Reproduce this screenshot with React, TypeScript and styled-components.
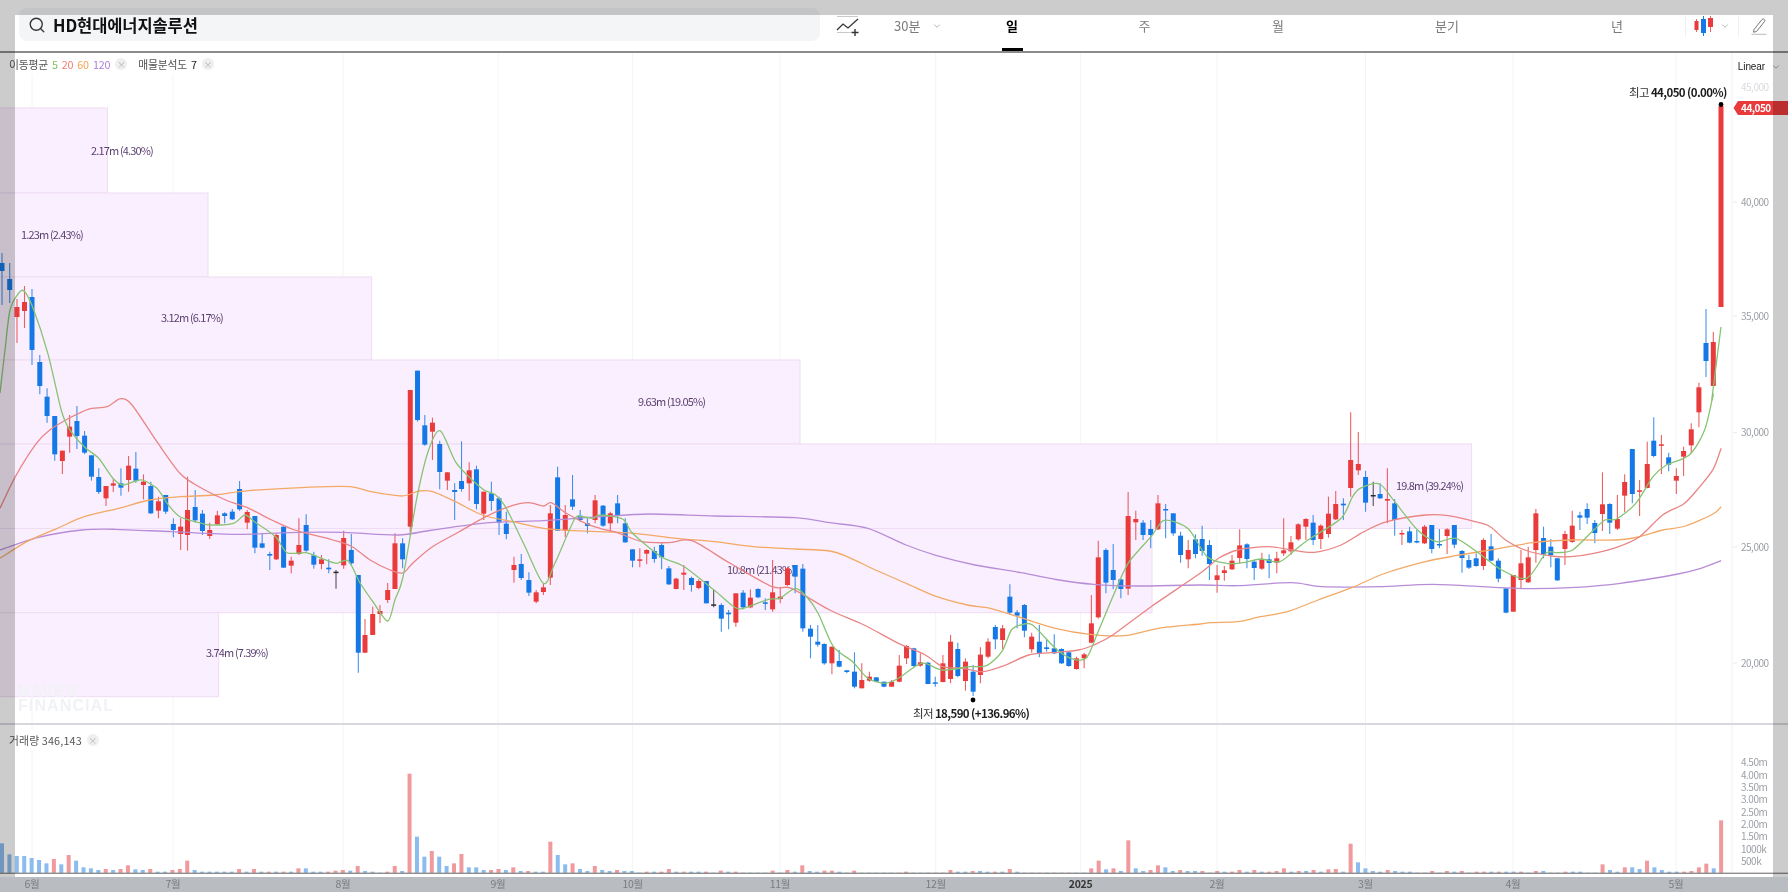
import styled, { createGlobalStyle } from 'styled-components'
import { Search, ChevronDown } from 'lucide-react'

type Tone = 'r' | 'b' | 'k'
type RawCandle = [number, Tone, number, number, number, number]
type Point = [number, number]

interface Candle {
  x: number
  tone: Tone
  high: number
  top: number
  bottom: number
  low: number
}

const RED = '#e93a3c'
const BLUE = '#1479e6'
const DARK = '#2a2a2a'
const TONE: Record<Tone, string> = { r: RED, b: BLUE, k: DARK }

// values were read in three horizontal slices of the chart, each with its own scale
const SLICE_A = { x0: 0, y0: 300, sx: 2.613 }
const SLICE_B = { x0: 600, y0: 350, sx: 2.613 }
const SLICE_C = { x0: 1188, y0: 350, sx: 2.613 }

const toCandles = (s: typeof SLICE_A, rows: RawCandle[]): Candle[] =>
  rows.map(([X, tone, h, t, b, l]) => ({
    x: s.x0 + X / s.sx,
    tone,
    high: s.y0 + h / 3,
    top: s.y0 + t / 3,
    bottom: s.y0 + b / 3,
    low: s.y0 + l / 3,
  }))

const toPath = (s: typeof SLICE_A, rows: Point[]): Point[] =>
  rows.map(([X, Y]) => [s.x0 + X / s.sx, s.y0 + Y / 3])

const candles: Candle[] = [
  { x: 2, tone: 'b', high: 253, top: 263, bottom: 271, low: 305 },
  { x: 9.7, tone: 'b', high: 263, top: 279, bottom: 290, low: 303 },
  { x: 17, tone: 'r', high: 299, top: 307, bottom: 317, low: 343 },
  { x: 24.5, tone: 'r', high: 286, top: 302, bottom: 311, low: 328 },
  { x: 32, tone: 'b', high: 289, top: 297, bottom: 350, low: 365 },
  ...toCandles(SLICE_A, [
    [104, 'b', 165, 186, 258, 283], [123, 'b', 265, 290, 348, 368], [143, 'b', 348, 348, 463, 482],
    [163, 'r', 452, 452, 483, 522], [182, 'r', 345, 380, 410, 458], [201, 'b', 318, 363, 408, 447],
    [221, 'b', 393, 407, 458, 463], [239, 'b', 466, 466, 530, 542], [258, 'b', 505, 531, 576, 582],
    [277, 'r', 558, 558, 595, 618], [296, 'r', 538, 550, 557, 576], [316, 'b', 505, 550, 563, 587],
    [336, 'r', 468, 497, 540, 575], [355, 'b', 456, 506, 542, 548], [375, 'r', 523, 545, 555, 598],
    [394, 'b', 545, 558, 640, 642], [414, 'r', 590, 604, 632, 655], [433, 'b', 585, 585, 635, 642],
    [453, 'b', 655, 672, 690, 712], [472, 'r', 655, 680, 702, 750], [490, 'r', 530, 630, 705, 752],
    [510, 'b', 570, 621, 661, 668], [529, 'b', 630, 641, 693, 705], [548, 'r', 668, 690, 708, 717],
    [568, 'r', 632, 646, 673, 675], [587, 'b', 637, 640, 648, 670], [607, 'b', 627, 635, 658, 660],
    [626, 'b', 543, 567, 628, 632], [646, 'r', 630, 636, 668, 688], [666, 'b', 648, 648, 743, 760],
    [685, 'b', 700, 730, 743, 745], [705, 'b', 755, 762, 767, 810], [722, 'r', 700, 705, 778, 780],
    [741, 'b', 680, 680, 803, 803], [761, 'r', 770, 782, 797, 820], [781, 'r', 655, 735, 762, 765],
    [800, 'b', 643, 675, 752, 755], [820, 'b', 755, 766, 794, 806], [840, 'r', 765, 778, 792, 808],
    [859, 'b', 778, 803, 808, 820], [878, 'k', 810, 815, 818, 866], [898, 'r', 692, 714, 796, 806],
    [918, 'b', 702, 750, 790, 797],
  ]),
  { x: 358.3, tone: 'b', high: 575, top: 575, bottom: 652.7, low: 672.7 },
  { x: 365, tone: 'r', high: 619, top: 635, bottom: 652.7, low: 653 },
  { x: 372.7, tone: 'r', high: 606.7, top: 614, bottom: 635, low: 635 },
  { x: 380, tone: 'r', high: 605, top: 611, bottom: 614, low: 623 },
  { x: 387.7, tone: 'r', high: 583, top: 590, bottom: 600, low: 603 },
  ...toCandles(SLICE_A, [
    [1032, 'r', 700, 730, 867, 867], [1052, 'b', 715, 730, 778, 805], [1072, 'r', 270, 270, 680, 705],
    [1091, 'b', 212, 212, 360, 365], [1110, 'b', 345, 376, 434, 437], [1130, 'r', 353, 368, 395, 480],
    [1149, 'b', 422, 432, 516, 568], [1169, 'r', 517, 517, 542, 570], [1188, 'b', 550, 570, 576, 660],
    [1206, 'b', 424, 543, 567, 575], [1226, 'r', 487, 511, 550, 602], [1245, 'b', 497, 508, 612, 628],
    [1264, 'r', 575, 575, 641, 660], [1284, 'b', 545, 580, 603, 632], [1304, 'b', 590, 595, 668, 705],
    [1323, 'b', 635, 671, 702, 718], [1343, 'r', 770, 795, 810, 848], [1362, 'b', 762, 792, 834, 840],
    [1382, 'b', 817, 840, 878, 888], [1401, 'r', 870, 877, 905, 910], [1420, 'r', 850, 862, 876, 885],
    [1438, 'r', 615, 640, 833, 855], [1457, 'b', 500, 532, 692, 692], [1477, 'r', 615, 645, 692, 712],
    [1496, 'b', 525, 598, 620, 630], [1516, 'b', 630, 647, 660, 665], [1535, 'b', 655, 670, 678, 700],
    [1555, 'r', 585, 601, 660, 670],
  ]),
  ...toCandles(SLICE_B, [
    [8, 'b', 465, 467, 527, 530], [27, 'r', 485, 490, 520, 545], [46, 'b', 435, 460, 497, 520],
    [66, 'b', 505, 520, 577, 578], [85, 'b', 598, 598, 632, 652], [104, 'r', 595, 628, 632, 652],
    [122, 'r', 598, 600, 611, 643], [142, 'b', 590, 603, 627, 638], [161, 'b', 580, 585, 622, 658],
    [180, 'b', 648, 655, 703, 705], [199, 'r', 683, 686, 717, 718], [219, 'r', 645, 668, 674, 720],
    [239, 'b', 680, 684, 705, 725], [258, 'r', 688, 693, 714, 718], [278, 'b', 693, 693, 760, 760],
    [297, 'k', 720, 763, 765, 772], [317, 'b', 760, 765, 806, 845], [336, 'b', 780, 788, 793, 838],
    [355, 'r', 730, 730, 818, 830], [374, 'b', 720, 728, 772, 778], [393, 'r', 718, 743, 772, 775],
    [413, 'b', 715, 717, 742, 745], [432, 'b', 745, 757, 761, 780], [451, 'r', 630, 727, 778, 785],
    [471, 'r', 710, 740, 747, 760], [490, 'r', 650, 655, 705, 708], [510, 'b', 645, 645, 680, 730],
    [530, 'b', 642, 656, 835, 845], [550, 'b', 825, 836, 860, 925], [569, 'b', 825, 875, 884, 890],
    [586, 'b', 880, 882, 940, 944], [606, 'r', 890, 890, 940, 973], [625, 'b', 900, 933, 950, 952],
    [645, 'b', 960, 961, 966, 970], [665, 'b', 907, 965, 1010, 1015], [684, 'r', 940, 990, 1015, 1015],
    [704, 'r', 965, 980, 992, 995], [722, 'b', 982, 982, 995, 995], [742, 'b', 995, 995, 1010, 1012],
    [762, 'r', 990, 995, 1010, 1010], [782, 'r', 915, 947, 995, 997], [801, 'r', 885, 888, 925, 942],
    [820, 'b', 893, 895, 948, 950], [837, 'r', 910, 937, 947, 950], [857, 'b', 935, 938, 1002, 1003],
    [876, 'b', 980, 997, 1000, 1010], [896, 'r', 915, 940, 996, 997], [916, 'r', 855, 875, 987, 1000],
    [935, 'b', 878, 897, 978, 982], [955, 'r', 925, 935, 993, 1022], [975, 'b', 945, 965, 1025, 1038],
    [994, 'r', 892, 914, 975, 1000], [1014, 'r', 865, 875, 920, 925], [1033, 'b', 825, 831, 868, 898],
    [1052, 'r', 825, 835, 870, 897], [1071, 'b', 703, 740, 788, 795], [1090, 'b', 780, 787, 797, 835],
    [1109, 'b', 762, 765, 842, 862], [1128, 'r', 848, 860, 898, 908], [1148, 'b', 825, 875, 910, 922],
    [1167, 'b', 868, 892, 897, 905], [1187, 'b', 853, 895, 910, 912], [1206, 'b', 895, 897, 940, 942],
    [1225, 'b', 905, 907, 948, 950], [1245, 'r', 920, 925, 957, 959], [1265, 'r', 908, 913, 925, 955],
    [1284, 'r', 735, 820, 878, 880], [1302, 'r', 572, 622, 802, 806], [1322, 'b', 595, 600, 698, 730],
    [1341, 'b', 582, 660, 690, 718], [1361, 'b', 688, 688, 717, 745], [1380, 'r', 426, 498, 716, 735],
    [1400, 'r', 482, 507, 517, 570], [1419, 'b', 510, 518, 555, 570], [1439, 'b', 510, 537, 555, 595],
    [1458, 'r', 435, 460, 538, 540], [1478, 'b', 462, 477, 480, 565], [1498, 'b', 490, 490, 550, 557],
    [1517, 'b', 545, 557, 615, 638], [1537, 'r', 570, 600, 628, 655], [1556, 'b', 553, 568, 612, 625],
  ]),
  ...toCandles(SLICE_C, [
    [37, 'b', 527, 567, 603, 617], [56, 'b', 570, 585, 642, 690], [76, 'r', 645, 676, 690, 728],
    [95, 'r', 648, 661, 669, 692], [115, 'r', 615, 632, 658, 660], [135, 'r', 538, 586, 624, 640],
    [154, 'b', 580, 583, 627, 655], [173, 'b', 630, 635, 654, 690], [193, 'r', 608, 628, 656, 660],
    [212, 'b', 613, 628, 639, 685], [232, 'r', 605, 625, 638, 670], [250, 'r', 505, 601, 610, 618],
    [269, 'r', 558, 577, 604, 615], [288, 'r', 520, 523, 568, 572], [308, 'r', 505, 507, 530, 570],
    [327, 'b', 495, 518, 570, 585], [347, 'r', 523, 527, 567, 597], [367, 'r', 440, 491, 552, 563],
    [386, 'r', 423, 462, 508, 510], [406, 'b', 445, 461, 466, 510], [425, 'r', 187, 330, 414, 440],
    [445, 'r', 246, 342, 361, 375], [464, 'b', 362, 381, 458, 485], [484, 'k', 395, 435, 438, 468],
    [502, 'b', 400, 432, 445, 447], [521, 'r', 355, 447, 452, 520], [540, 'b', 447, 460, 510, 557],
    [559, 'r', 540, 549, 552, 585], [579, 'b', 530, 544, 578, 580], [598, 'b', 540, 573, 577, 580],
    [618, 'r', 525, 530, 580, 582], [637, 'b', 525, 525, 597, 610], [657, 'b', 537, 582, 585, 595],
    [677, 'r', 535, 538, 558, 612], [696, 'b', 525, 525, 584, 595], [716, 'b', 600, 603, 624, 668],
    [734, 'b', 615, 630, 653, 657], [753, 'b', 610, 625, 648, 650], [772, 'r', 565, 570, 648, 660],
    [792, 'b', 552, 589, 632, 634], [811, 'b', 625, 632, 686, 697], [831, 'b', 715, 715, 788, 790],
    [850, 'r', 675, 675, 785, 785], [870, 'r', 600, 640, 690, 715], [889, 'r', 590, 622, 697, 698],
    [909, 'r', 477, 490, 600, 638], [929, 'b', 530, 564, 614, 625], [948, 'b', 567, 590, 615, 652],
    [965, 'b', 625, 625, 691, 693], [985, 'r', 542, 552, 597, 645], [1004, 'r', 482, 527, 576, 578],
    [1024, 'b', 485, 496, 503, 540], [1043, 'b', 460, 477, 503, 522], [1063, 'b', 510, 519, 549, 580],
    [1083, 'r', 367, 463, 492, 543], [1102, 'b', 460, 462, 518, 552], [1122, 'r', 435, 507, 536, 540],
    [1141, 'r', 373, 396, 437, 487], [1161, 'b', 297, 297, 432, 460], [1180, 'r', 390, 421, 424, 498],
    [1200, 'r', 275, 342, 414, 415], [1217, 'b', 202, 272, 318, 322], [1237, 'r', 255, 283, 285, 372],
    [1256, 'b', 308, 322, 344, 364], [1276, 'r', 355, 378, 392, 432], [1295, 'r', 290, 303, 320, 378],
    [1315, 'r', 220, 238, 286, 310], [1335, 'r', 98, 112, 187, 232],
  ]),
  { x: 1706, tone: 'b', high: 309, top: 343, bottom: 361, low: 377 },
  { x: 1713.3, tone: 'r', high: 332, top: 342, bottom: 386, low: 386 },
  { x: 1721, tone: 'r', high: 105, top: 106, bottom: 307, low: 307 },
]

const ma5: Point[] = [
  [0, 393], [5, 350], [10, 310], [18, 294], [24, 291], [33, 308],
  ...toPath(SLICE_A, [
    [125, 160], [160, 330], [180, 385], [220, 440], [258, 475], [295, 535], [320, 555], [350, 545], [372, 540],
    [410, 565], [440, 615], [470, 650], [520, 668], [550, 675], [610, 670], [640, 645], [665, 665], [720, 710],
    [750, 758], [800, 758], [840, 775], [878, 790], [910, 782], [941, 849], [975, 906], [1013, 963], [1032, 900],
    [1053, 831], [1090, 590], [1120, 450], [1150, 392], [1190, 485], [1225, 530], [1265, 570], [1295, 585],
    [1323, 625], [1370, 735], [1420, 850], [1450, 790], [1500, 660], [1520, 650], [1550, 655],
  ]),
  ...toPath(SLICE_B, [
    [0, 495], [60, 508], [85, 550], [160, 620], [220, 650], [298, 720], [350, 770], [375, 775], [440, 748], [470, 745],
    [510, 715], [540, 740], [570, 790], [610, 890], [660, 935], [700, 985], [745, 1000], [780, 985], [840, 940],
    [895, 960], [965, 950], [1010, 947], [1050, 905], [1075, 840], [1100, 825], [1130, 825], [1190, 895], [1230, 925],
    [1270, 925], [1300, 850], [1340, 740], [1380, 640], [1440, 560], [1470, 513], [1500, 515], [1540, 540],
  ]),
  ...toPath(SLICE_C, [
    [50, 620], [100, 640], [150, 637], [190, 627], [240, 635], [290, 590], [320, 565], [400, 505], [430, 440], [450, 415],
    [500, 402], [540, 455], [600, 540], [650, 575], [700, 565], [760, 610], [820, 660], [885, 685], [935, 610], [965, 608],
    [1005, 600], [1060, 540], [1090, 510], [1120, 507], [1170, 460], [1215, 380], [1250, 345], [1310, 315], [1350, 240],
    [1372, 135],
  ]),
  [1712, 398], [1721, 327],
]

const ma20: Point[] = [
  ...toPath(SLICE_A, [
    [0, 625], [40, 530], [95, 430], [130, 390], [180, 355], [230, 328], [280, 320], [315, 296], [345, 315], [410, 425],
    [470, 520], [520, 560], [590, 600], [650, 625], [710, 660], [770, 690], [870, 720], [920, 740], [967, 780], [1019, 810],
    [1053, 819], [1079, 789], [1130, 740], [1200, 695], [1270, 650], [1330, 620], [1380, 608], [1420, 618], [1440, 608],
    [1480, 640], [1530, 670],
  ]),
  ...toPath(SLICE_B, [
    [0, 535], [50, 550], [110, 575], [180, 578], [240, 572], [340, 640], [450, 710], [500, 715], [600, 780], [690, 825],
    [780, 880], [850, 915], [895, 950], [950, 955], [1000, 965], [1060, 945], [1120, 915], [1180, 908], [1250, 900],
    [1290, 885], [1340, 855], [1440, 770], [1568, 670],
  ]),
  ...toPath(SLICE_C, [
    [80, 625], [130, 600], [210, 590], [270, 600], [330, 607], [400, 585], [460, 545], [520, 515], [620, 495], [680, 497],
    [750, 515], [790, 530], [830, 570], [880, 600], [950, 618], [1000, 620], [1060, 610], [1120, 592], [1180, 560],
    [1240, 495], [1295, 462], [1330, 420], [1372, 358], [1393, 295],
  ]),
]

const ma60: Point[] = [
  ...toPath(SLICE_A, [
    [0, 775], [70, 725], [150, 685], [220, 650], [310, 625], [390, 600], [470, 590], [560, 585], [650, 572], [800, 562],
    [915, 560], [970, 575], [1050, 588], [1095, 573], [1130, 575], [1190, 605], [1260, 645], [1340, 665], [1420, 685],
    [1500, 692],
  ]),
  ...toPath(SLICE_B, [
    [0, 545], [90, 550], [200, 565], [300, 575], [400, 590], [510, 597], [600, 603], [650, 622], [720, 660], [800, 700],
    [880, 740], [960, 765], [1020, 775], [1100, 803], [1190, 835], [1280, 853], [1370, 857], [1460, 835], [1568, 822],
  ]),
  ...toPath(SLICE_C, [
    [60, 818], [130, 815], [190, 800], [260, 785], [340, 750], [430, 712], [510, 672], [620, 635], [700, 617], [800, 598],
    [900, 578], [1000, 570], [1120, 570], [1180, 560], [1240, 540], [1300, 528], [1372, 492], [1393, 470],
  ]),
]

const ma120: Point[] = [
  ...toPath(SLICE_A, [
    [0, 750], [100, 712], [215, 690], [300, 688], [450, 695], [620, 703], [780, 697], [900, 697], [1040, 705], [1130, 690],
    [1280, 668], [1420, 662], [1568, 650],
  ]),
  ...toPath(SLICE_B, [
    [130, 492], [300, 498], [510, 503], [600, 518], [700, 535], [800, 585], [880, 617], [980, 645], [1100, 668], [1200, 690],
    [1290, 703], [1400, 708], [1568, 705],
  ]),
  ...toPath(SLICE_C, [
    [130, 707], [270, 698], [350, 710], [500, 710], [640, 703], [800, 712], [900, 716], [1000, 713], [1130, 700], [1280, 672],
    [1340, 655], [1393, 632],
  ]),
]

const profile = [
  { top: 108, bottom: 193, right: 107.4, text: '2.17m (4.30%)', tx: 91, ty: 154.5 },
  { top: 193, bottom: 277, right: 208, text: '1.23m (2.43%)', tx: 21, ty: 239 },
  { top: 277, bottom: 360, right: 371.6, text: '3.12m (6.17%)', tx: 161, ty: 322 },
  { top: 360, bottom: 444, right: 800, text: '9.63m (19.05%)', tx: 638, ty: 406 },
  { top: 444, bottom: 528.5, right: 1471.6, text: '19.8m (39.24%)', tx: 1396, ty: 490 },
  { top: 528.5, bottom: 612.7, right: 1152, text: '10.8m (21.43%)', tx: 727, ty: 574 },
  { top: 612.7, bottom: 696.7, right: 218.7, text: '3.74m (7.39%)', tx: 206, ty: 657 },
]

const priceTicks = [
  { y: 202, label: '40,000' }, { y: 316, label: '35,000' }, { y: 432.7, label: '30,000' },
  { y: 547, label: '25,000' }, { y: 663, label: '20,000' },
]
const volumeTicks = [
  { y: 762.7, label: '4.50m' }, { y: 775, label: '4.00m' }, { y: 787, label: '3.50m' }, { y: 799, label: '3.00m' },
  { y: 812, label: '2.50m' }, { y: 824, label: '2.00m' }, { y: 836.7, label: '1.50m' }, { y: 849, label: '1000k' }, { y: 861, label: '500k' },
]
const months = [
  { x: 32, label: '6월' }, { x: 173, label: '7월' }, { x: 343, label: '8월' }, { x: 498, label: '9월' },
  { x: 632.6, label: '10월' }, { x: 780, label: '11월' }, { x: 935.7, label: '12월' }, { x: 1080.6, label: '2025', strong: true },
  { x: 1217, label: '2월' }, { x: 1365.5, label: '3월' }, { x: 1513, label: '4월' }, { x: 1676, label: '5월' },
]

const volumeLeft = 'b490 b523 b528 b528 b534 b540 b550 r537 b553 r525 b542 b562 b565 b570 r567 b570 r567 r556 b568 b570 r567 b575 b575 r570 r567 r542 b570 b575 b575 b575 b575 b575 r567 b575 r567 b575 r575 b575 r575 b575 r565 b565 b575 b575 r575 r572 r570 b572 r558 b573 b575 b578 r575 r558 b573 r281 b470 b530 r513 b530 b558 r550 r522 b562 b562 b570 r570 r567 b570 r562 b573 r573 b575 b575 r485 b525 b553 r550 b567 b573 r558 b570 b573 r570 b573 b573 b578 r575 b575 r575 r567 b575 r575 b575 b575 r575 b578 r572 b575 r575 b578 b578 b578 b578 r572 b578 r570 b575 r556 b573 b575 r572 r572 b575 b578 r572 b578 b578 b578 b578 b578 r578'
const volumeRight = 'r575 b578 b578 b578 r578 r578 r570 b575 b575 r573 b573 b575 r575 b575 r567 b575 b578 b578 r578 b578 r578 b578 r578 b578 b578 r565 r542 b568 r565 b573 r481 b565 b573 r570 r556 b562 b573 r570 b573 b573 r573 b578 r573 b575 r575 r570 b575 r570 b575 r575 r573 r565 b575 r573 b573 r570 b575 r568 r567 b575 r491 b547 b565 b573 b575 r570 b573 b575 b575 b578 b578 r573 b578 r573 b575 r573 b578 r575 r575 b575 r575 b575 b575 r575 b578 r573 b573 b578 b578 r575 b575 b575 b578 b578 r553 b570 b575 r562 b562 b567 r542 b562 b570 b575 b575 r575 r573 r562 r551 b565 r421'

const volumes = `${volumeLeft} ${volumeRight}`.split(' ').map((token, i) => ({
  x: 2 + i * 7.41,
  tone: token[0] as Tone,
  top: 680 + Number(token.slice(1)) / 3,
}))

// catmull-rom through the read points, the chart library draws its averages as curves
function smoothPath(pts: Point[]): string {
  const k = 1 / 7
  let d = `M${pts[0][0].toFixed(1)} ${pts[0][1].toFixed(1)}`
  for (let i = 0; i < pts.length - 1; i++) {
    const p0 = pts[Math.max(i - 1, 0)]
    const p1 = pts[i]
    const p2 = pts[i + 1]
    const p3 = pts[Math.min(i + 2, pts.length - 1)]
    const c1x = p1[0] + (p2[0] - p0[0]) * k
    const c1y = p1[1] + (p2[1] - p0[1]) * k
    const c2x = p2[0] - (p3[0] - p1[0]) * k
    const c2y = p2[1] - (p3[1] - p1[1]) * k
    d += `C${c1x.toFixed(1)} ${c1y.toFixed(1)} ${c2x.toFixed(1)} ${c2y.toFixed(1)} ${p2[0].toFixed(1)} ${p2[1].toFixed(1)}`
  }
  return d
}

const GlobalStyle = createGlobalStyle`
  html, body { margin: 0; padding: 0; background: #fff; overflow: hidden; }
  body { font-family: "Noto Sans CJK KR", "Noto Sans", sans-serif; }
`

const Page = styled.div`
  position: relative; width: 1788px; height: 892px; background: #fff; overflow: hidden;
  filter: blur(0.35px);
`
const Frame = styled.div`
  position: absolute; inset: 0; box-sizing: border-box; border: 15px solid rgba(0, 0, 0, 0.2);
  pointer-events: none; z-index: 5;
`
const Header = styled.header`
  display: flex; align-items: center; height: 51px; padding-left: 19px;
  border-bottom: 2px solid #8c8c8c;
`
const SearchBox = styled.div`
  display: flex; align-items: center; gap: 7px; box-sizing: border-box;
  width: 801px; height: 33px; padding-left: 9px; margin-top: -2px;
  background: #f3f5f7; border-radius: 8px; color: #333;
`
const StockName = styled.span`
  color: #111; font-size: 16.5px; font-weight: 700; letter-spacing: -0.1px;
`
const IconSlot = styled.div`
  display: flex; align-items: center; justify-content: center; margin-left: 16px; width: 24px; height: 24px;
`
const IntervalSelect = styled.div`
  display: flex; align-items: center; width: 52px; margin-left: 34px; color: #7b7b7b; font-size: 13px;
  gap: 12px;
`
const Tabs = styled.nav`
  display: flex;
`
const Tab = styled.div<{ $width: number; $active?: boolean }>`
  position: relative; display: flex; align-items: center; justify-content: center;
  width: ${p => p.$width}px; height: 51px;
  color: ${p => (p.$active ? '#000' : '#7b7b7b')};
  font-size: 13px; font-weight: ${p => (p.$active ? 700 : 400)};
  ${p => p.$active && `
    &::after {
      content: ''; position: absolute; left: 50%; bottom: 0; width: 21px; height: 3px;
      margin-left: -10px; background: #000;
    }
  `}
`
const ToolCell = styled.div<{ $width: number }>`
  display: flex; align-items: center; justify-content: center; gap: 7px;
  width: ${p => p.$width}px; height: 22px; border-left: 1px solid #f1f2f3; color: #aaa;
`
const PricePane = styled.section`
  position: relative; height: 670px; border-bottom: 2px solid #d6d8dc;
`
const VolumePane = styled.section`
  position: relative; height: 149px;
`
const ChartSvg = styled.svg`
  display: block;
`
const Legend = styled.div<{ $top: number; $spacing: number }>`
  position: absolute; top: ${p => p.$top}px; left: 9px; display: flex; align-items: center; height: 20px;
  padding-right: 6px; background: #fff; color: #555; font-size: 10.8px; letter-spacing: ${p => p.$spacing}px;
  z-index: 2;
`
const LegendValue = styled.span<{ $color: string }>`
  margin-left: 4px; color: ${p => p.$color};
`
const CloseDot = styled.span`
  display: flex; align-items: center; justify-content: center; width: 12px; height: 12px; margin: 0 11px 0 5px;
  border-radius: 50%; background: #efefef; color: #b5b5b5; font-size: 9px; line-height: 1;
`
const ScaleSelect = styled.div`
  position: absolute; top: 8px; right: 7px; display: flex; align-items: center; gap: 6px;
  color: #222; font-family: "Liberation Sans", sans-serif; font-size: 10px; letter-spacing: -0.1px; z-index: 2;
`
const TimeAxis = styled.div`
  height: 18px;
`
const AxisLabel = styled.text<{ $faded?: boolean }>`
  fill: ${p => (p.$faded ? '#d8dbde' : '#9a9fa5')}; font-size: 10px; letter-spacing: -0.5px;
`
const MonthLabel = styled.text<{ $strong?: boolean }>`
  fill: ${p => (p.$strong ? '#444' : '#989ca2')}; font-size: 10.5px; letter-spacing: -0.3px;
  font-weight: ${p => (p.$strong ? 700 : 400)}; text-anchor: middle;
`
const ProfileLabel = styled.text`
  fill: #5b3f70; font-size: 11px; letter-spacing: -0.85px;
`
const Extreme = styled.text`
  fill: #333; font-size: 11.5px; letter-spacing: -0.6px;
`
const ExtremeValue = styled.tspan`
  fill: #1c1c1c; font-weight: 700;
`
const PriceTag = styled.text`
  fill: #fff; font-size: 10px; font-weight: 700; letter-spacing: -0.5px;
`
const Watermark = styled.text`
  fill: #f0f2f5; font-family: "Liberation Sans", sans-serif; font-size: 16px; font-weight: 700; letter-spacing: 1.1px;
`
const AverageLine = styled.path<{ $color: string }>`
  fill: none; stroke: ${p => p.$color}; stroke-width: 1.3;
`

function GridLines({ from, to }: { from: number; to: number }) {
  return (
    <>
      {months.map(m => (
        <line key={m.label} x1={m.x} x2={m.x} y1={from} y2={to} stroke="#f3f4f6" />
      ))}
      <line x1={1732} x2={1732} y1={from} y2={to} stroke="#f0f1f3" />
    </>
  )
}

function AddLineIcon() {
  return (
    <svg width="24" height="22" viewBox="0 0 24 22" fill="none">
      <path d="M1 1.5h21M1 17.5h14" stroke="#c9c9c9" strokeWidth="1.2" />
      <path d="M1 15l6-6 5 4 10-9" stroke="#333" strokeWidth="1.3" />
      <path d="M19 14v7M15.5 17.5h7" stroke="#333" strokeWidth="1.4" />
    </svg>
  )
}

function CandleIcon() {
  return (
    <svg width="19" height="20" viewBox="0 0 19 20" fill="none">
      <path d="M2.5 3v13" stroke={RED} strokeWidth="0.8" />
      <rect x="0.5" y="5" width="4" height="9" fill={RED} />
      <path d="M9.5 0v20" stroke={BLUE} strokeWidth="1" />
      <rect x="7" y="3" width="5" height="14" fill={BLUE} />
      <path d="M16.5 0v16" stroke={RED} strokeWidth="0.8" />
      <rect x="14" y="2" width="5" height="9" fill={RED} />
    </svg>
  )
}

function PencilIcon() {
  return (
    <svg width="16" height="18" viewBox="0 0 16 18" fill="none">
      <path d="M3 12.5L11 2.5a1.6 1.6 0 0 1 2.4 0a1.6 1.6 0 0 1 0 2.2L5.5 14.5L2.5 15.2z" stroke="#777" strokeWidth="1" />
      <path d="M0.5 17.3h15" stroke="#bbb" strokeWidth="1" />
    </svg>
  )
}

export default function App() {
  return (
    <Page>
      <GlobalStyle />
      <Header>
        <SearchBox>
          <Search size={18} strokeWidth={1.8} />
          <StockName>HD현대에너지솔루션</StockName>
        </SearchBox>
        <IconSlot><AddLineIcon /></IconSlot>
        <IntervalSelect>
          30분
          <ChevronDown size={10} color="#aaa" />
        </IntervalSelect>
        <Tabs>
          <Tab $width={132} $active>일</Tab>
          <Tab $width={133}>주</Tab>
          <Tab $width={134}>월</Tab>
          <Tab $width={204}>분기</Tab>
          <Tab $width={136}>년</Tab>
        </Tabs>
        <ToolCell $width={52}>
          <CandleIcon />
          <ChevronDown size={10} color="#aaa" />
        </ToolCell>
        <ToolCell $width={40}><PencilIcon /></ToolCell>
      </Header>

      <PricePane>
        <Legend $top={1} $spacing={-0.2}>
          이동평균
          <LegendValue $color="#7cc35f">5</LegendValue>
          <LegendValue $color="#ef7c72">20</LegendValue>
          <LegendValue $color="#f2a652">60</LegendValue>
          <LegendValue $color="#ac80d8">120</LegendValue>
          <CloseDot>×</CloseDot>
          매물분석도
          <LegendValue $color="#222">7</LegendValue>
          <CloseDot>×</CloseDot>
        </Legend>
        <ScaleSelect>
          Linear
          <ChevronDown size={10} color="#999" />
        </ScaleSelect>
        <ChartSvg width="1788" height="670" viewBox="0 53 1788 670" fontFamily='"Noto Sans CJK KR", "Noto Sans", sans-serif'>
          <GridLines from={53} to={723} />
          {profile.map(row => (
            <g key={row.text}>
              <rect x={-2} y={row.top} width={row.right + 2} height={row.bottom - row.top} fill="#faeffe" stroke="#eedcf4" />
              <ProfileLabel x={row.tx} y={row.ty}>{row.text}</ProfileLabel>
            </g>
          ))}
          <Watermark x={18} y={697}>NAVER</Watermark>
          <Watermark x={18} y={711}>FINANCIAL</Watermark>
          {candles.map(c => (
            <g key={c.x}>
              <line x1={c.x} x2={c.x} y1={c.high} y2={c.low} stroke={TONE[c.tone]} strokeWidth={1.1} opacity={0.8} />
              <rect
                x={c.x - 2.5}
                y={c.top}
                width={5}
                height={Math.max(c.bottom - c.top, 1.5)}
                fill={TONE[c.tone]}
              />
            </g>
          ))}
          <AverageLine d={smoothPath(ma120)} $color="#b88dd8" />
          <AverageLine d={smoothPath(ma60)} $color="#f3a965" />
          <AverageLine d={smoothPath(ma20)} $color="#ea8585" />
          <AverageLine d={smoothPath(ma5)} $color="#86c473" />

          <circle cx={1721} cy={104.5} r={2.4} fill="#000" />
          <Extreme x={1629} y={97}>
            최고 <ExtremeValue>44,050 (0.00%)</ExtremeValue>
          </Extreme>
          <circle cx={973} cy={700} r={2.4} fill="#000" />
          <Extreme x={913} y={718}>
            최저 <ExtremeValue>18,590 (+136.96%)</ExtremeValue>
          </Extreme>

          <AxisLabel $faded x={1741} y={91}>45,000</AxisLabel>
          {priceTicks.map(t => (
            <g key={t.label}>
              <line x1={1733} x2={1737} y1={t.y} y2={t.y} stroke="#e9eaec" />
              <AxisLabel x={1741} y={t.y + 3.5}>{t.label}</AxisLabel>
            </g>
          ))}
          <polygon points="1733.5,108 1738,101 1790,101 1790,115 1738,115" fill={RED} />
          <PriceTag x={1741} y={111.5}>44,050</PriceTag>
        </ChartSvg>
      </PricePane>

      <VolumePane>
        <Legend $top={5} $spacing={0.15}>
          거래량 346,143
          <CloseDot>×</CloseDot>
        </Legend>
        <ChartSvg width="1788" height="149" viewBox="0 725 1788 149" fontFamily='"Noto Sans CJK KR", "Noto Sans", sans-serif'>
          <GridLines from={725} to={874} />
          {volumes.map(v => (
            <rect key={v.x} x={v.x - 2} y={v.top} width={4} height={874 - v.top} fill={v.tone === 'r' ? '#f19a9e' : '#8bbcef'} />
          ))}
          {volumeTicks.map(t => (
            <AxisLabel key={t.label} x={1741} y={t.y + 3.5}>{t.label}</AxisLabel>
          ))}
          <rect x={0} y={872.6} width={1788} height={1.4} fill="#8e8e8e" />
        </ChartSvg>
      </VolumePane>

      <TimeAxis>
        <ChartSvg width="1788" height="18" viewBox="0 874 1788 18" fontFamily='"Noto Sans CJK KR", "Noto Sans", sans-serif'>
          <rect x={0} y={877} width={1788} height={15} fill="#e8ebf0" />
          {months.map(m => (
            <MonthLabel key={m.label} $strong={m.strong} x={m.x} y={887.5}>{m.label}</MonthLabel>
          ))}
        </ChartSvg>
      </TimeAxis>
      <Frame />
    </Page>
  )
}
